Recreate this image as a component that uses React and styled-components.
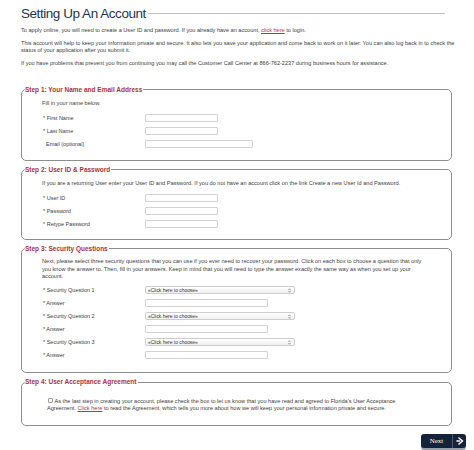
import React from "react";
import styled, { createGlobalStyle } from "styled-components";

const GlobalStyle = createGlobalStyle`
  html, body {
    margin: 0;
    padding: 0;
    background: #fff;
  }
  body {
    font-family: "Liberation Sans", Arial, sans-serif;
    color: #3d3d3d;
  }
`;

const Page = styled.div`
  width: 474px;
  height: 450px;
  box-sizing: border-box;
  padding: 5.8px 8px 0 21px;
  overflow: hidden;
`;

const Header = styled.div`
  display: flex;
  align-items: center;
  margin-right: 21px;
`;

const Title = styled.h1`
  margin: 0;
  font-size: 13.5px;
  line-height: 16px;
  font-weight: normal;
  letter-spacing: -0.45px;
  color: #1f3450;
`;

const TitleRule = styled.div`
  flex: 1;
  height: 1px;
  margin: 0 0 0 2px;
  background: #c2c2c2;
`;

const Intro = styled.div`
  margin-top: 5.7px;
  padding-right: 8px;
`;

const Text = styled.p`
  margin: 0 0 ${(p) => p.$gap ?? 0}px;
  font-size: 5.6px;
  line-height: ${(p) => p.$lh ?? 7}px;
`;

const Link = styled.a`
  color: #b03444;
  text-decoration: underline;
  white-space: nowrap;
`;

const Steps = styled.div`
  display: flex;
  flex-direction: column;
  gap: 5px;
  margin: 18.5px 14px 0 0;
`;

const Step = styled.fieldset`
  margin: 0;
  padding: 0 0 0 3px;
  min-width: 0;
  border: 1px solid #8e8e8e;
  border-radius: 5px;
`;

const Legend = styled.legend`
  padding: 0 1px 0 0;
  font-size: 6.5px;
  line-height: 8px;
  font-weight: bold;
  color: #a83240;
`;

const StepBody = styled.div`
  display: flex;
  flex-direction: column;
  gap: 5px;
  padding: ${(p) => p.$top ?? 6.5}px 26px ${(p) => p.$bottom ?? 12}px ${(p) => p.$left ?? 17}px;
`;

const Row = styled.div`
  display: flex;
  align-items: center;
  height: 8px;
`;

const Label = styled.label`
  flex: none;
  width: 103px;
  box-sizing: border-box;
  padding-left: ${(p) => (p.$plain ? 4 : 1)}px;
  font-size: 5.5px;
  line-height: 8px;
  white-space: nowrap;
`;

const Field = styled.input`
  box-sizing: border-box;
  width: ${(p) => p.$w}px;
  height: 8px;
  margin: 0;
  padding: 0 2px;
  border: 1px solid #d2d2d2;
  border-radius: 1px;
  background: #fff;
  font-size: 5px;
`;

const SelectBox = styled.div`
  box-sizing: border-box;
  width: 150px;
  height: 8px;
  display: flex;
  align-items: center;
  justify-content: space-between;
  padding: 0 3px 0 2px;
  border: 1px solid #cdcdcd;
  border-radius: 2px;
  background: linear-gradient(#ffffff, #f0f0f0);
  font-size: 4.9px;
  color: #333;
`;

const Check = styled.span`
  display: inline-block;
  box-sizing: border-box;
  width: 5px;
  height: 5px;
  margin: 0 1.5px 0 1px;
  vertical-align: -0.5px;
  border: 1px solid #9a9a9a;
  border-radius: 1px;
  background: #fff;
`;

const Footer = styled.div`
  display: flex;
  justify-content: flex-end;
  margin-top: 8px;
`;

const NextButton = styled.button`
  display: flex;
  align-items: stretch;
  height: 14px;
  padding: 0;
  border: none;
  border-radius: 3px;
  background: #15223b;
  color: #fff;
  box-shadow: 0 2px 0 #98a0ad;
  overflow: hidden;
`;

const NextLabel = styled.span`
  width: 31px;
  display: flex;
  align-items: center;
  justify-content: center;
  border-right: 1px solid #4b5771;
  font-family: "Liberation Serif", "Times New Roman", serif;
  font-size: 7px;
`;

const NextArrow = styled.span`
  width: 13px;
  display: flex;
  align-items: center;
  justify-content: center;
`;

const UpDown = () => (
  <svg width="3" height="5" viewBox="0 0 6 10" fill="none" stroke="#666" strokeWidth="1.3">
    <path d="M1 4 L3 1.5 L5 4" />
    <path d="M1 6 L3 8.5 L5 6" />
  </svg>
);

const Chevron = () => (
  <svg width="8" height="8" viewBox="0 0 8 8" fill="none" stroke="#fff" strokeWidth="1.6" strokeLinecap="round" strokeLinejoin="round">
    <path d="M3 1 L6.5 4 L3 7" />
    <path d="M1 4 L3.5 4" />
  </svg>
);

const questions = [1, 2, 3];

export default function App() {
  return (
    <>
      <GlobalStyle />
      <Page>
        <Header>
          <Title>Setting Up An Account</Title>
          <TitleRule />
        </Header>

        <Intro>
          <Text $gap={6}>
            To apply online, you will need to create a User ID and password. If you already have an
            account, <Link>click here</Link> to login.
          </Text>
          <Text $gap={6}>
            This account will help to keep your information private and secure. It also lets you save
            your application and come back to work on it later. You can also log back in to check the
            status of your application after you submit it.
          </Text>
          <Text>
            If you have problems that prevent you from continuing you may call the Customer Call Center
            at 866-762-2237 during business hours for assistance.
          </Text>
        </Intro>

        <Steps>
          <Step>
            <Legend>Step 1: Your Name and Email Address</Legend>
            <StepBody>
              <Text $gap={1.5}>Fill in your name below.</Text>
              <Row>
                <Label>* First Name</Label>
                <Field $w={73} />
              </Row>
              <Row>
                <Label>* Last Name</Label>
                <Field $w={73} />
              </Row>
              <Row>
                <Label $plain>Email (optional)</Label>
                <Field $w={108} />
              </Row>
            </StepBody>
          </Step>

          <Step>
            <Legend>Step 2: User ID &amp; Password</Legend>
            <StepBody $bottom={11}>
              <Text $gap={1.5}>
                If you are a returning User enter your User ID and Password. If you do not have an
                account click on the link Create a new User Id and Password.
              </Text>
              <Row>
                <Label>* User ID</Label>
                <Field $w={73} />
              </Row>
              <Row>
                <Label>* Password</Label>
                <Field $w={73} type="password" />
              </Row>
              <Row>
                <Label>* Retype Password</Label>
                <Field $w={73} type="password" />
              </Row>
            </StepBody>
          </Step>

          <Step>
            <Legend>Step 3: Security Questions</Legend>
            <StepBody $top={5.5} $bottom={13}>
              <Text $gap={0.5} $lh={7.5}>
                Next, please select three security questions that you can use if you ever need to
                recover your password. Click on each box to choose a question that only you know the
                answer to. Then, fill in your answers. Keep in mind that you will need to type the
                answer exactly the same way as when you set up your account.
              </Text>
              {questions.map((n) => (
                <React.Fragment key={n}>
                  <Row>
                    <Label>* Security Question {n}</Label>
                    <SelectBox>
                      <span>«Click here to choose»</span>
                      <UpDown />
                    </SelectBox>
                  </Row>
                  <Row>
                    <Label>* Answer</Label>
                    <Field $w={123} />
                  </Row>
                </React.Fragment>
              ))}
            </StepBody>
          </Step>

          <Step>
            <Legend>Step 4: User Acceptance Agreement</Legend>
            <StepBody $top={11.5} $left={22}>
              <Text $lh={7.5}>
                <Check />
                As the last step in creating your account, please check the box to let us know that
                you have read and agreed to Florida's User Acceptance
                <br />
                Agreement. <Link>Click here</Link> to read the Agreement, which tells you more about
                how we will keep your personal information private and secure.
              </Text>
            </StepBody>
          </Step>
        </Steps>

        <Footer>
          <NextButton>
            <NextLabel>Next</NextLabel>
            <NextArrow>
              <Chevron />
            </NextArrow>
          </NextButton>
        </Footer>
      </Page>
    </>
  );
}
